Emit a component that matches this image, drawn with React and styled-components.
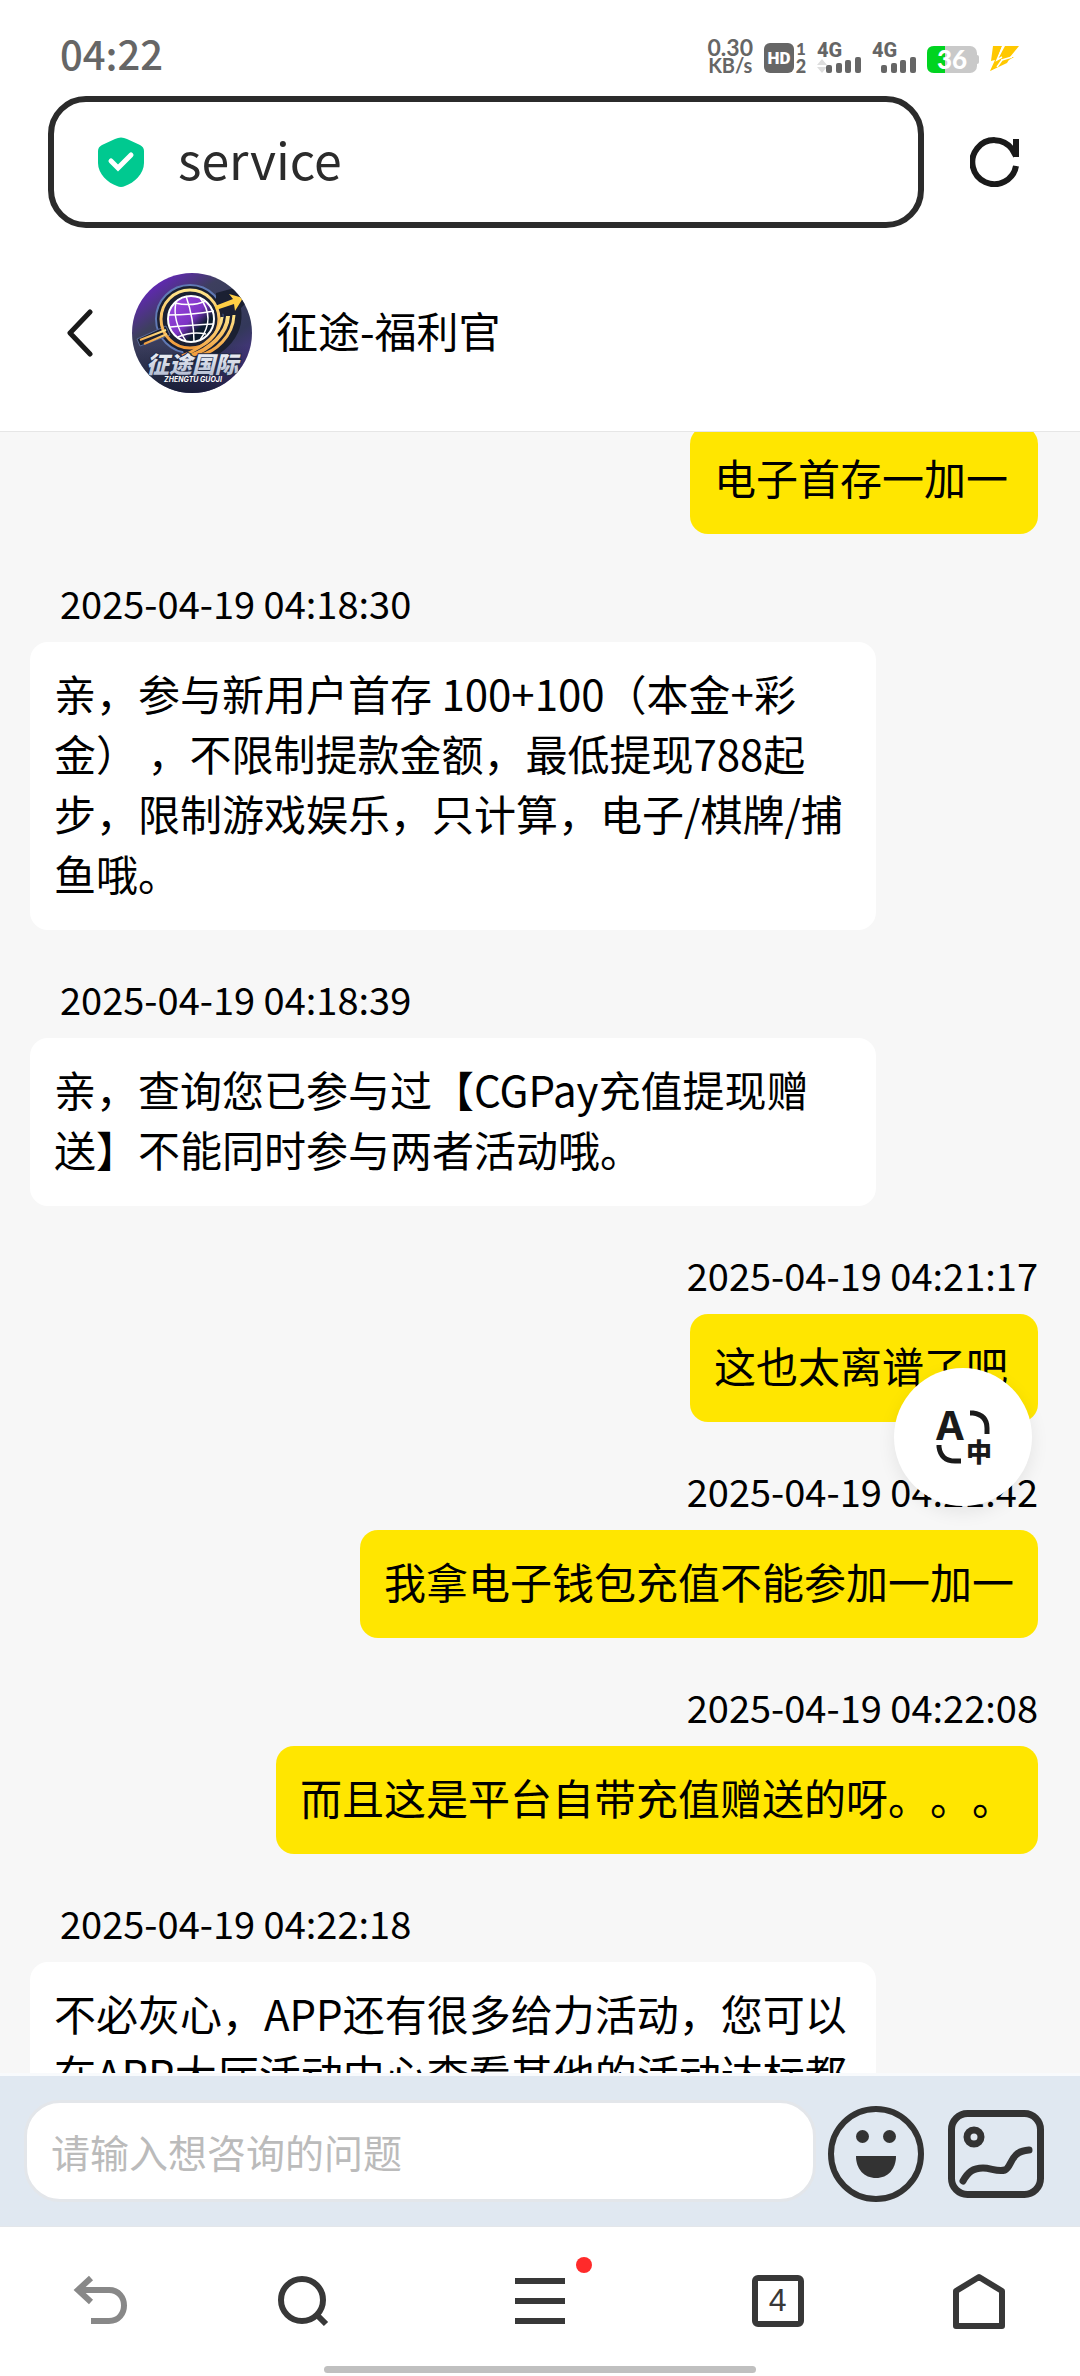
import React, {useState} from 'react';
import styled, {createGlobalStyle} from "styled-components";

const messages = [
    { id: 1, mine: true, text: "电子首存一加一" },
    { id: 2, time: "2025-04-19 04:18:30", text: "亲，参与新用户首存 100+100（本金+彩金） ，不限制提款金额，最低提现788起步，限制游戏娱乐，只计算，电子/棋牌/捕鱼哦。" },
    { id: 3, time: "2025-04-19 04:18:39", text: "亲，查询您已参与过【CGPay充值提现赠送】不能同时参与两者活动哦。" },
    { id: 4, mine: true, time: "2025-04-19 04:21:17", text: "这也太离谱了吧" },
    { id: 5, mine: true, time: "2025-04-19 04:21:42", text: "我拿电子钱包充值不能参加一加一" },
    { id: 6, mine: true, time: "2025-04-19 04:22:08", text: "而且这是平台自带充值赠送的呀。。。" },
    { id: 7, time: "2025-04-19 04:22:18", text: "不必灰心，APP还有很多给力活动，您可以在APP大厅活动中心查看其他的活动达标都" },
];

const Signal = ({ arrows }) => (
    <svg width="44" height="34" viewBox="0 0 44 34" fill="#666">
        <text x="0" y="17" fontSize="20" fontWeight="800" fontFamily="Roboto, sans-serif">4G</text>
        {arrows && <path d="M0 25L5 19L10 25ZM0 27L5 33L10 27Z" fill="#ddd" />}
        <rect x="9" y="25" width="6" height="8" rx="2" />
        <rect x="19" y="23" width="6" height="10" rx="2" />
        <rect x="28" y="20" width="6" height="13" rx="2" />
        <rect x="38" y="17" width="6" height="16" rx="2" />
    </svg>
);

const StatusIcons = () => (
    <StatusRight>
        <Speed><span>0.30</span><small>KB/s</small></Speed>
        <svg width="42" height="34" viewBox="0 0 42 34" fill="#666">
            <rect y="3" width="30" height="30" rx="6" />
            <text x="15" y="24" fontSize="17" fontWeight="900" fill="#fff" textAnchor="middle" fontFamily="Roboto, sans-serif">HD</text>
            <text x="37" y="15" fontSize="17" fontWeight="900" textAnchor="middle" fontFamily="Lato, sans-serif">1</text>
            <text x="37" y="33" fontSize="18" fontWeight="900" textAnchor="middle" fontFamily="Lato, sans-serif">2</text>
        </svg>
        <Signal arrows />
        <Signal />
        <svg width="52" height="34" viewBox="0 0 52 34">
            <rect y="6" width="50" height="27" rx="7" fill="#c9c9c9" />
            <path d="M7 6H18V33H7Q0 33 0 26V13Q0 6 7 6Z" fill="#00d420" />
            <path d="M50 15Q52 15 52 17V22Q52 24 50 24Z" fill="#c9c9c9" />
            <text x="25" y="29" fontSize="26" fontWeight="900" fill="#fff" textAnchor="middle" fontFamily="Lato, sans-serif">36</text>
        </svg>
        <svg width="30" height="34" viewBox="0 0 30 34" fill="#ffc800">
            <path d="M3 6H12L8 17L13 15L11 20L20 18L17 23L0 31L5 20L1 21Z" />
            <path d="M15 6H29L20 17H24L0 31L13 19H8Z" />
            <path d="M13 6L7 20L12 17M22 17L12 20L7 27" fill="none" stroke="#fff" strokeWidth="1.5" />
        </svg>
    </StatusRight>
);

const Logo = () => (
    <svg width="120" height="120" viewBox="0 0 120 120" role="img" aria-label="征途国际">
        <defs>
            <linearGradient id="sky" x1="0.2" y1="0" x2="0.9" y2="1">
                <stop offset="0" stopColor="#6a22c8" />
                <stop offset="0.28" stopColor="#3d3f5e" />
                <stop offset="0.65" stopColor="#33385a" />
                <stop offset="1" stopColor="#5a33a8" />
            </linearGradient>
            <linearGradient id="shade" x1="0" y1="0" x2="0" y2="1">
                <stop offset="0.6" stopColor="#161c30" stopOpacity="0" />
                <stop offset="1" stopColor="#161c30" stopOpacity="0.9" />
            </linearGradient>
            <linearGradient id="gold" x1="0" y1="0" x2="0" y2="1">
                <stop offset="0" stopColor="#ffe58a" />
                <stop offset="1" stopColor="#f09a3a" />
            </linearGradient>
            <linearGradient id="planet" x1="0" y1="0" x2="1" y2="1">
                <stop offset="0" stopColor="#a24be6" />
                <stop offset="0.5" stopColor="#7d33c4" />
                <stop offset="0.7" stopColor="#0c1b2d" />
                <stop offset="1" stopColor="#0c1b2d" />
            </linearGradient>
            <linearGradient id="steel" x1="0" y1="0" x2="0" y2="1">
                <stop offset="0" stopColor="#ffffff" />
                <stop offset="1" stopColor="#a9b4cc" />
            </linearGradient>
            <clipPath id="round"><circle cx="60" cy="60" r="60" /></clipPath>
        </defs>
        <g clipPath="url(#round)">
            <rect width="120" height="120" fill="url(#sky)" />
            <rect width="120" height="120" fill="url(#shade)" />
            <circle cx="58" cy="46" r="34" fill="#1b2032" stroke="#6079b4" strokeWidth="2" />
            <path d="M100 36C104 60 84 80 52 84" fill="none" stroke="#1b2032" strokeWidth="18" />
            <path d="M5 66L34 53L38 62L8 73Z" fill="#1b2032" stroke="#5a6a98" />
            <path d="M84 20L106 14L116 28L102 42L84 40Z" fill="#1b2032" />
            <circle cx="58" cy="46" r="29" fill="none" stroke="url(#gold)" strokeWidth="3" />
            <g fill="none" stroke="url(#gold)" strokeWidth="3">
                <path d="M102 42C101 63 84 79 66 83" />
                <path d="M96 43C95 61 78 76 58 83" strokeWidth="4" />
                <path d="M90 44C89 59 73 74 50 83" />
                <path d="M8 67L34 57M12 71L35 61" strokeWidth="2" />
            </g>
            <path d="M83 33L101 26L97 21L111 25L103 38L102 31L84 37Z" fill="#ffcf45" />
            <circle cx="59" cy="46" r="23" fill="url(#planet)" stroke="#fff" strokeWidth="2" />
            <g fill="none" stroke="#fff" strokeWidth="1.5">
                <path d="M54 23Q62 46 62 69M44 29Q40 48 54 68M68 25Q84 45 68 67" />
                <path d="M43 30Q60 34 74 28M36 42Q60 42 82 38M38 54Q62 52 81 51M46 64Q60 58 74 61" />
            </g>
            <text x="60" y="100" textAnchor="middle" fontSize="23" fontWeight="900" fontStyle="italic" fontFamily="'Noto Sans CJK SC', sans-serif" fill="url(#steel)" stroke="#222b45" strokeWidth="2" paintOrder="stroke">征途国际</text>
            <text x="61" y="109" textAnchor="middle" fontSize="7" fontWeight="700" fontStyle="italic" fontFamily="Inter, sans-serif" fill="#fff">ZHENGTU GUOJI</text>
        </g>
    </svg>
);

const App = () => {
    const [question, setQuestion] = useState("");

    const handleChange = e => {
        setQuestion(e.target.value);
    };

    const handleSubmit = e => {
        e.preventDefault();
        setQuestion("");
    };

    return(
        <Page>
            <GlobalStyle />
            <StatusBar>
                <Clock>04:22</Clock>
                <StatusIcons />
            </StatusBar>
            <BrowserBar>
                <Address>
                    <svg width="46" height="50" viewBox="0 0 46 50">
                        <path d="M17 2Q23 -1 29 2L42 8Q46 10 46 14V26C46 37 36 46 27 49Q23 51 19 49C10 46 0 37 0 26V14Q0 10 4 8Z" fill="#00c990" />
                        <path d="M13 24L20 31L33 18" fill="none" stroke="#fff" strokeWidth="5" strokeLinecap="round" />
                    </svg>
                    <Host>service</Host>
                </Address>
                <IconButton aria-label="刷新">
                    <svg width="50" height="50" viewBox="0 0 50 50" fill="none" stroke="#1a1a1a" strokeWidth="6">
                        <path d="M46 29A22 22 0 1 1 42 12L46 19" />
                        <path d="M46 2V20" />
                    </svg>
                </IconButton>
            </BrowserBar>
            <ChatHeader>
                <IconButton aria-label="返回">
                    <svg width="28" height="48" viewBox="0 0 28 48" fill="none" stroke="#1a1a1a" strokeWidth="5" strokeLinecap="round" strokeLinejoin="round">
                        <path d="M24 3L4 24L24 45" />
                    </svg>
                </IconButton>
                <Logo />
                <Title>征途-福利官</Title>
            </ChatHeader>
            <Chat>
                <MessageList>
                    {messages.map(msg => (
                        <Message key={msg.id} $mine={msg.mine}>
                            {msg.time && <Time $mine={msg.mine}>{msg.time}</Time>}
                            <Bubble $mine={msg.mine}>{msg.text}</Bubble>
                        </Message>
                    ))}
                </MessageList>
                <TranslateButton aria-label="翻译">
                    <svg width="56" height="56" viewBox="0 0 56 56" fill="#1a1a1a">
                        <text x="15" y="31" textAnchor="middle" fontSize="40" fontWeight="700" fontFamily="Inter, sans-serif">A</text>
                        <path d="M35 4H38Q52 6 52 19V25M4 36V38Q6 52 20 52H26" fill="none" stroke="#1a1a1a" strokeWidth="5" />
                        <text x="44" y="53" textAnchor="middle" fontSize="26" fontWeight="900" fontFamily="'Noto Sans CJK SC', sans-serif">中</text>
                    </svg>
                </TranslateButton>
            </Chat>
            <Composer onSubmit={handleSubmit}>
                <Question
                type="text"
                name="question"
                aria-label="请输入想咨询的问题"
                placeholder="请输入想咨询的问题"
                onChange={handleChange}
                value={question}
                />
                <IconButton type="button" aria-label="表情">
                    <svg width="96" height="96" viewBox="0 0 96 96" fill="#333">
                        <circle cx="48" cy="48" r="45" fill="none" stroke="#333" strokeWidth="6" />
                        <circle cx="34.500" cy="30.500" r="6.500" />
                        <circle cx="61.500" cy="30.500" r="6.500" />
                        <path d="M28 50H68C68 63 60 72 48 72S28 63 28 50Z" />
                    </svg>
                </IconButton>
                <IconButton type="button" aria-label="图片">
                    <svg width="96" height="96" viewBox="0 0 96 96" fill="none" stroke="#333" strokeWidth="7">
                        <rect x="3.500" y="7.500" width="89" height="81" rx="16" />
                        <circle cx="26" cy="31" r="7" />
                        <path d="M15 75C20 66 25 62 35 62C43 62 49 66 57 64C64 61 62 45 81 44" strokeLinecap="round" />
                    </svg>
                </IconButton>
            </Composer>
            <BottomBar>
                <Tabs>
                    <IconButton aria-label="后退">
                        <svg width="56" height="56" viewBox="0 0 56 56" fill="none" stroke="#888" strokeWidth="6">
                            <path d="M18 5L5 17L18 29M5 17H36C56 17 56 48 36 48H18" />
                        </svg>
                    </IconButton>
                    <IconButton aria-label="搜索">
                        <svg width="56" height="56" viewBox="0 0 56 56" fill="none" stroke="#383838" strokeWidth="6">
                            <circle cx="28" cy="27" r="21" />
                            <path d="M42 41L52 51" />
                        </svg>
                    </IconButton>
                    <IconButton aria-label="菜单">
                        <svg width="50" height="56" viewBox="0 0 50 56" fill="none" stroke="#383838" strokeWidth="6">
                            <path d="M0 8H50M0 28H50M0 48H50" />
                        </svg>
                        <Dot />
                    </IconButton>
                    <IconButton aria-label="标签页">
                        <TabCount>4</TabCount>
                    </IconButton>
                    <IconButton aria-label="主页">
                        <svg width="56" height="60" viewBox="0 0 56 60" fill="none" stroke="#383838" strokeWidth="6" strokeLinejoin="round">
                            <path d="M5 20L28 6L51 20V55H5Z" />
                        </svg>
                    </IconButton>
                </Tabs>
                <HomeIndicator />
            </BottomBar>
        </Page>
    )
}

const GlobalStyle = createGlobalStyle`
  * {
    box-sizing: border-box;
  }
  body {
    margin: 0;
  }
  svg {
    display: block;
    flex: none;
  }
`;

const Page = styled.div`
  display: flex;
  flex-direction: column;
  height: 100vh;
  overflow: hidden;
  background: #ffffff;
  color: #000000;
  font-family: "Noto Sans CJK SC", sans-serif;
  text-spacing-trim: space-all;
`;

const StatusBar = styled.div`
  display: flex;
  align-items: flex-end;
  justify-content: space-between;
  height: 96px;
  padding: 0 60px 22px;
  color: #666666;
`;

const Clock = styled.span`
  font-size: 40px;
  line-height: 42px;
  font-weight: 500;
`;

const StatusRight = styled.div`
  display: flex;
  align-items: flex-end;
  gap: 11px;
`;

const Speed = styled.div`
  display: flex;
  flex-direction: column;
  align-items: center;
  font-family: Lato, sans-serif;
  font-size: 23px;
  line-height: 18px;
  font-weight: 700;

  small {
    font-size: 20px;
  }
`;

const BrowserBar = styled.div`
  display: flex;
  align-items: center;
  gap: 46px;
  padding: 0 60px 0 48px;
`;

const Address = styled.div`
  display: flex;
  flex: 1;
  align-items: center;
  gap: 34px;
  height: 132px;
  padding: 0 44px;
  border: 6px solid #2b2b2b;
  border-radius: 38px;
`;

const Host = styled.span`
  padding-bottom: 8px;
  color: #2b2b2b;
  font-size: 50px;
  line-height: 60px;
`;

const IconButton = styled.button`
  position: relative;
  display: flex;
  align-items: center;
  justify-content: center;
  padding: 0;
  border: 0;
  background: none;
`;

const ChatHeader = styled.header`
  display: flex;
  align-items: center;
  margin-top: 6px;
  height: 198px;
  padding: 0 66px;
  border-bottom: 1px solid #e6e6e6;

  > svg {
    margin: 0 24px 0 38px;
  }
`;

const Title = styled.h1`
  margin: 0;
  padding-bottom: 6px;
  font-size: 42px;
  line-height: 60px;
  font-weight: 400;
`;

const Chat = styled.main`
  position: relative;
  flex: 1 1 0;
  overflow: hidden;
  background: #f7f7f7;
`;

/* the thread is scrolled a little, its first bubble runs under the header */
const MessageList = styled.div`
  display: flex;
  flex-direction: column;
  gap: 42px;
  margin-top: -6px;
  padding: 0 42px 0 30px;
`;

const Message = styled.div`
  display: flex;
  flex-direction: column;
  align-items: ${props => props.$mine ? "flex-end" : "flex-start"};
`;

const Time = styled.time`
  margin: 0 0 12px;
  padding-left: ${props => props.$mine ? "0" : "30px"};
  font-size: 38px;
  line-height: 54px;
`;

const Bubble = styled.div`
  min-width: 348px;
  max-width: calc(100% - 162px);
  padding: 21px 24px 27px;
  border-radius: 18px;
  background: ${props => props.$mine ? "#ffe600" : "#ffffff"};
  font-size: 42px;
  line-height: 60px;
`;

const TranslateButton = styled.button`
  position: absolute;
  right: 48px;
  bottom: 567px;
  display: flex;
  align-items: center;
  justify-content: center;
  width: 138px;
  height: 138px;
  padding: 0;
  border: 0;
  border-radius: 50%;
  background: #ffffff;
  box-shadow: 0 6px 18px rgba(0, 0, 0, 0.08);
`;

const Composer = styled.form`
  display: flex;
  align-items: center;
  height: 153px;
  gap: 12px;
  padding: 6px 36px 0 24px;
  border-top: 3px solid #f8fafc;
  background: #e0e8f1;

  button + button {
    margin-left: 12px;
  }
`;

const Question = styled.input`
  flex: 1;
  min-width: 0;
  height: 102px;
  margin-bottom: 6px;
  padding: 0 24px;
  border: 3px solid #e3e6ea;
  border-radius: 36px;
  outline: none;
  background: #ffffff;
  font-family: inherit;
  font-size: 39px;

  &::placeholder {
    color: #bbbbbb;
  }
`;

const BottomBar = styled.footer`
  display: flex;
  flex-direction: column;
  align-items: center;
  justify-content: space-between;
  height: 150px;
  padding-bottom: 3px;
  border-top: 1px solid #e3e6ea;
`;

const Tabs = styled.nav`
  display: grid;
  grid-template-columns: 1fr 1fr 274px 1fr 1fr;
  align-self: stretch;
  align-items: center;
  padding-top: 44px;
`;

const Dot = styled.span`
  position: absolute;
  top: -16px;
  left: calc(50% + 36px);
  width: 16px;
  height: 16px;
  border-radius: 50%;
  background: #ff2a2a;
`;

const TabCount = styled.span`
  width: 52px;
  height: 52px;
  border: 6px solid #383838;
  border-radius: 6px;
  color: #383838;
  font-size: 32px;
  line-height: 38px;
  font-weight: 500;
  text-align: center;
`;

const HomeIndicator = styled.div`
  width: 40%;
  height: 7px;
  border-radius: 4px;
  background: #c0c0c0;
`;

export default App;
